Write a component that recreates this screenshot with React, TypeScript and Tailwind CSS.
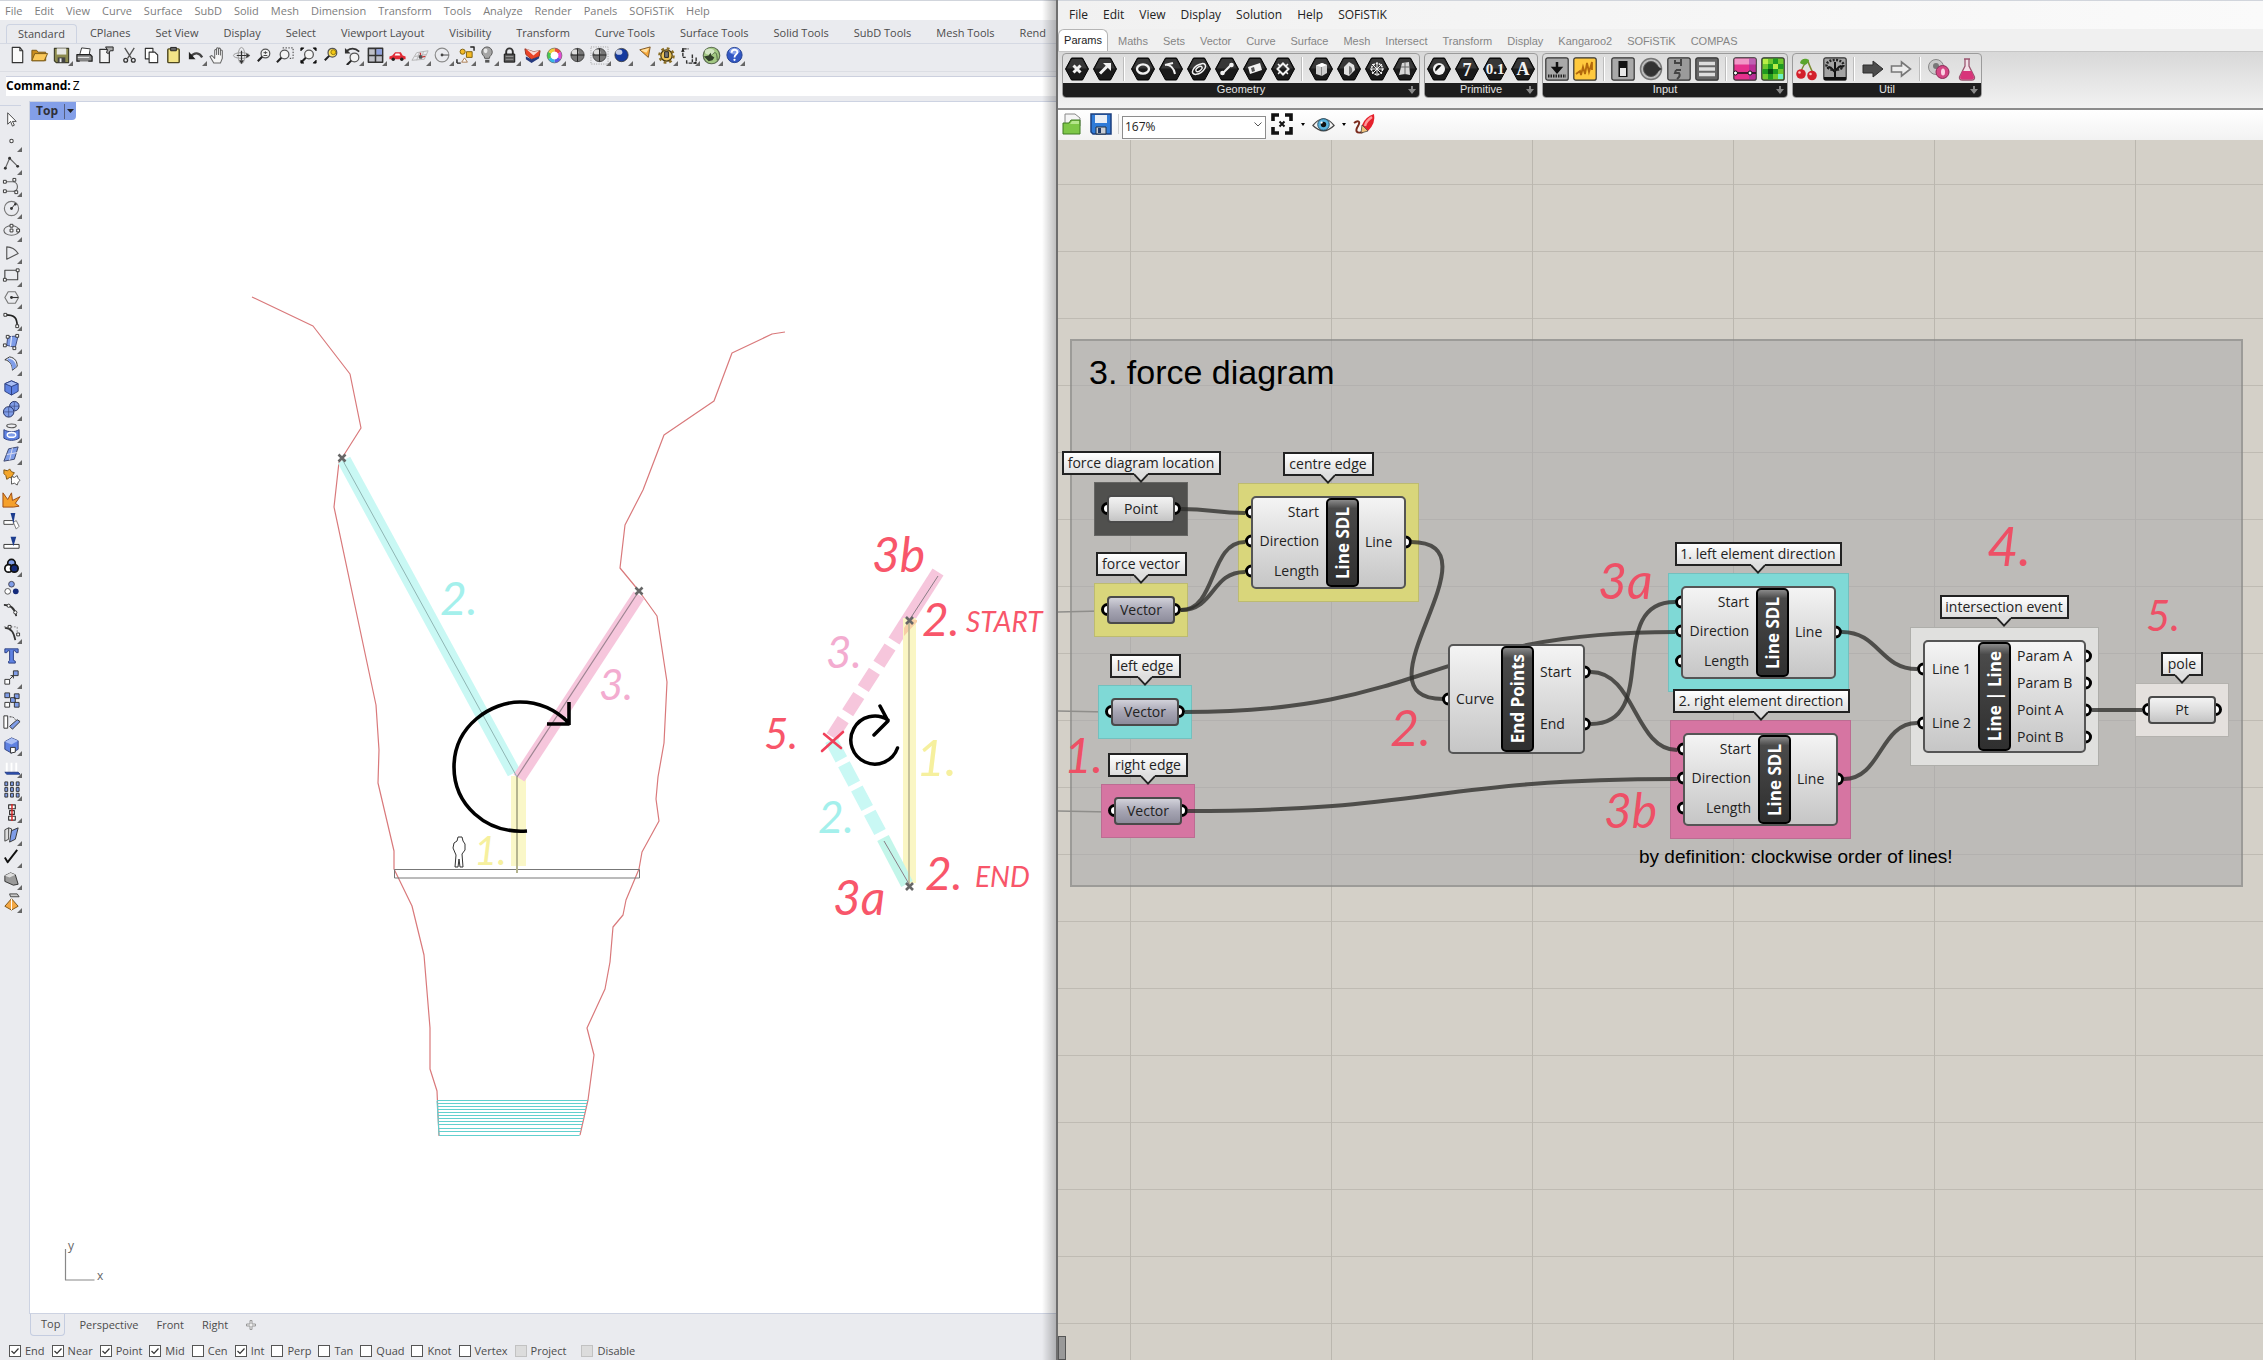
import React from "react";

type Icon = { label: string; art: React.ReactNode; more?: boolean };

const Lens = ({ x = 12, y = 7, fill = "#f4f4f4" }: { x?: number; y?: number; fill?: string }) => (
  <>
    <circle cx={x} cy={y} r="4.6" fill={fill} stroke="#555" strokeWidth="1.3" />
    <path d={`M${x - 3.4} ${y + 3.4} L${x - 8} ${y + 8}`} stroke="#222" strokeWidth="2.2" />
  </>
);

const Sphere = ({ color }: { color: string }) => (
  <>
    <circle cx="10" cy="9.5" r="7" fill={color} stroke="#333" strokeWidth="0.8" />
    <ellipse cx="7.5" cy="6.5" rx="3.4" ry="2.8" fill="#fff" opacity="0.75" />
  </>
);

const standardIcons: Icon[] = [
  { label: "New", art: <path d="M4.500 1.500h8l3 3.500v12.500h-11z M12.500 1.500v3.500h3" fill="#fafafa" stroke="#333" strokeWidth="1.2" /> },
  { label: "Open", art: <><path d="M2 4.500h5l1.500 2h8v9H2z" fill="#c98d1e" stroke="#7a5a16" /><path d="M5 8h13.500l-3.500 7.500H2z" fill="#fbc95a" stroke="#7a5a16" /></> },
  { label: "Save", more: true, art: <><path d="M2.500 2.500h15v15h-13l-2-2z" fill="#8d8b4e" stroke="#3d3d2a" strokeWidth="1.200" /><path d="M5 2.500h10v6.500H5z" fill="#e8e8e4" /><path d="M6 12h8v5.500H6z" fill="#444" /><path d="M8 13h2v4H8z" fill="#eee" /></> },
  { label: "Print", art: <><path d="M7 2l9 1-1 6H5z" fill="#fff" stroke="#333" /><path d="M2 9h14l2 2v5H2z" fill="#888" stroke="#222" strokeWidth="1.300" /><path d="M3 12h12M5 16h9" stroke="#eee" /></> },
  { label: "Document properties", art: <><path d="M3 3.500h10v14H3z" fill="#f4f4f4" stroke="#333" strokeWidth="1.300" /><path d="M9 1h8v4h-3l-2 3-2-1 1-3z" fill="#aaa" stroke="#222" /></> },
  { label: "Cut", art: <><path d="M5 2l7 11M15 2L8 13" stroke="#555" strokeWidth="1.400" /><circle cx="6" cy="15" r="2" fill="none" stroke="#333" strokeWidth="1.400" /><circle cx="14" cy="15" r="2" fill="none" stroke="#333" strokeWidth="1.400" /></> },
  { label: "Copy", art: <><path d="M3.500 2.500h8v11h-8z" fill="#fff" stroke="#333" strokeWidth="1.200" /><path d="M7.500 6.500h6l3 3v8h-9z" fill="#fff" stroke="#333" strokeWidth="1.200" /></> },
  { label: "Paste", art: <><rect x="4" y="3" width="12" height="14.500" rx="1" fill="#f3e487" stroke="#4d4620" strokeWidth="1.500" /><path d="M7 1.500h6v3.500H7z" fill="#666" stroke="#222" /></> },
  { label: "Undo", more: true, art: <><path d="M4 11c4-5 9-4 12 1" fill="none" stroke="#444" strokeWidth="2.400" /><path d="M2 6v8h7z" fill="#222" /></> },
  { label: "Pan", art: <path d="M5 18l-4-7 2-1 3 3V4.500q1-1.500 2 0V9 2.500q1-1.500 2 0V9 3q1-1.500 2 0v6.500V5q1-1.500 2 0v8l-2 5z" fill="#f5f5f5" stroke="#666" strokeWidth="1.100" /> },
  { label: "Rotate view", art: <><ellipse cx="10" cy="10" rx="3.500" ry="8.500" fill="none" stroke="#999" /><ellipse cx="10" cy="10" rx="8.500" ry="3" fill="none" stroke="#999" /><path d="M10 5v10M5 10h10" stroke="#333" strokeWidth="1.300" /><path d="M15 7.500l4 2.500-4 2.500zM7.500 15l2.500 4 2.500-4z" fill="#333" /></> },
  { label: "Zoom dynamic", art: <><Lens x={12} y={8} /><path d="M10 7h4M12 5.500v3M10 10h4" stroke="#444" /></> },
  { label: "Zoom window", art: <><Lens x={9} y={9} /><path d="M7 2h11v11h-4" fill="none" stroke="#333" strokeDasharray="1.500 1.500" /></> },
  { label: "Zoom extents", art: <><Lens x={10.500} y={9} /><path d="M2 5V2h3zM18 5V2h-3zM18 15v3h-3zM2 15v3h3z" fill="#111" stroke="#111" /></> },
  { label: "Zoom selected", art: <><Lens x={12} y={7} fill="#ffe35e" /><circle cx="13" cy="6.500" r="2.600" fill="#f3c812" stroke="#8d7410" /></> },
  { label: "Undo view change", more: true, art: <><Lens x={11} y={12} /><path d="M3 5c4-3 9-3 13 1" fill="none" stroke="#333" strokeWidth="1.800" /><path d="M1 2v6h6z" fill="#333" /></> },
  { label: "Four viewports", more: true, art: <><rect x="2.500" y="2.500" width="15" height="14.500" fill="#bfc0c8" stroke="#333" strokeWidth="1.600" /><path d="M10.800 3.300h6v6h-6z" fill="#8fa0dc" /><path d="M10 2v15M2 10h16" stroke="#333" strokeWidth="1.600" /></> },
  { label: "Named views", more: true, art: <><path d="M1.500 11l3-1 3-3.500h6l2 3.500 3 1v3h-17z" fill="#e22b36" /><path d="M8 8h4l1 2H7z" fill="#fff" /><circle cx="5.500" cy="14" r="1.800" fill="#222" /><circle cx="14.500" cy="14" r="1.800" fill="#222" /></> },
  { label: "Set construction plane", more: true, art: <><path d="M1 15l5-8 12-2-4 9zM4 11l12-2M9 6.500L6 15M13 6l-2 8.500" fill="none" stroke="#b5b5b5" /><path d="M10 12V7M10 12l5-1" stroke="#c33" strokeWidth="1.300" /><circle cx="10" cy="11.500" r="2" fill="#555" /></> },
  { label: "Circle", more: true, art: <><circle cx="9.500" cy="9.500" r="7.200" fill="none" stroke="#8a8a8a" strokeWidth="1.200" /><path d="M9.500 9.500h7" stroke="#444" /><circle cx="9.500" cy="9.500" r="1.500" fill="#444" /></> },
  { label: "Select", more: true, art: <><path d="M1 18v-4M1 18h4M15 1h4v4" stroke="#222" fill="none" strokeWidth="1.500" /><circle cx="7" cy="6" r="2.700" fill="#f5ba24" stroke="#80610f" /><path d="M11 6h6v6h-6z" fill="#f5ba24" stroke="#80610f" /><path d="M9 12.500l3 4.500H6z" fill="#fff" stroke="#a7764a" /></> },
  { label: "Hide objects", more: true, art: <><path d="M7 13c0-3-3-3-3-6.500a5.500 5.500 0 0 1 11 0c0 3.500-3 3.500-3 6.500z" fill="#a5a5a5" stroke="#555" /><path d="M7.500 14.500h4.500v3h-4.500z" fill="#555" /><ellipse cx="8" cy="5" rx="2" ry="2.500" fill="#e9e9e9" /></> },
  { label: "Lock objects", more: true, art: <><path d="M6.500 9V6a3.500 3.500 0 0 1 7 0v3" fill="none" stroke="#333" strokeWidth="2" /><rect x="4.500" y="8.500" width="11" height="8.500" fill="#555" stroke="#111" /><path d="M6 11h8M6 14h8" stroke="#999" /></> },
  { label: "Layers", more: true, art: <><path d="M2 3l9 3 7-1-1 6-8 3-6-5z" fill="#ea4327" stroke="#932" /><path d="M3 3l8 3 6-1-6 5z" fill="#fff" opacity="0.800" /><path d="M3 11l6 3 8-3v2l-8 5-6-4z" fill="#25397e" /></> },
  { label: "Object properties", more: true, art: <g fill="none" strokeWidth="3.600"><circle cx="10" cy="10" r="4.500" fill="#fff" /><path d="M10 4a6 6 0 0 1 5.200 3" stroke="#f04a3a" /><path d="M15.200 7a6 6 0 0 1 0 6" stroke="#e34ad4" /><path d="M15.200 13a6 6 0 0 1-5.200 3" stroke="#5b59e8" /><path d="M10 16a6 6 0 0 1-5.200-3" stroke="#35b6e8" /><path d="M4.800 13a6 6 0 0 1 0-6" stroke="#48c850" /><path d="M4.800 7a6 6 0 0 1 5.200-3" stroke="#f0cf3a" /><circle cx="10" cy="10" r="7.800" stroke="#666" strokeWidth="0.700" /></g> },
  { label: "Shade", art: <><Sphere color="#777" /><path d="M3 9.500h14M10 2.500v14" stroke="#222" /></> },
  { label: "Shade selected", more: true, art: <><path d="M1 1h18v18H1z" fill="none" stroke="#999" strokeDasharray="1 1.500" /><Sphere color="#777" /><path d="M3 9.500h14M10 2.500v14" stroke="#222" /></> },
  { label: "Render", more: true, art: <Sphere color="#153a9e" /> },
  { label: "Spotlight", more: true, art: <><path d="M5 4l11-3-2 11z" fill="#f7a83a" stroke="#7d5a2a" /><path d="M6 4.500l9-2.500-3 5z" fill="#ffe1a2" /></> },
  { label: "Options", more: true, art: <><circle cx="10" cy="10" r="6" fill="#e9c257" stroke="#4a3a12" strokeWidth="1.300" /><circle cx="10" cy="10" r="7.500" fill="none" stroke="#8a6d24" strokeWidth="2.500" strokeDasharray="2.900 3" /><path d="M8 6h4v6H8z" fill="#777" stroke="#222" /></> },
  { label: "Dimension", more: true, art: <><path d="M3 2v10h3M3 3h6M13 9v8M7 15v3h10v-7" fill="none" stroke="#333" strokeWidth="1.500" strokeDasharray="4 1" /><path d="M1 6l2-3 2 3zM14 18l3-2v3z" fill="#222" /></> },
  { label: "Grasshopper", more: true, art: <><circle cx="10" cy="10" r="8.700" fill="#a3c983" stroke="#5b6b50" strokeWidth="1.200" /><ellipse cx="8" cy="6" rx="5" ry="3.200" fill="#d3e6c2" /><path d="M2 11l5-1 2-3 1 3 3 2-2 3-4 1z" fill="#32402b" /><path d="M11 9c3-4 5-2 5 6" fill="none" stroke="#4c6040" /></> },
  { label: "Help", more: true, art: <><circle cx="10" cy="9.500" r="8" fill="#3358c4" stroke="#23408f" /><ellipse cx="10" cy="5.500" rx="5.500" ry="3.500" fill="#86a0ea" /><path d="M7 7c0-4 6-4 6-.500 0 2.500-3 2.500-3 5.500" fill="none" stroke="#fff" strokeWidth="1.900" /><circle cx="10" cy="14.500" r="1.200" fill="#fff" /></> },
];

const Dot = ({ x, y }: { x: number; y: number }) => <rect x={x - 1.5} y={y - 1.5} width="3" height="3" fill="#fff" stroke="#333" />;
const BLUE = "#7f9de8";

const sideIcons: Icon[] = [
  { label: "Pointer", art: <path d="M6 3v12l3-3 2 5 2-1-2-4h4z" fill="#fff" stroke="#444" /> },
  { label: "Point", more: true, art: <circle cx="10" cy="9.500" r="1.800" fill="#fff" stroke="#444" strokeWidth="1.100" /> },
  { label: "Polyline", more: true, art: <><path d="M3.500 15L8 4.500 16.500 13" fill="none" stroke="#666" strokeWidth="1.200" /><circle cx="3.500" cy="15" r="1.500" fill="#333" /><circle cx="8" cy="4.500" r="1.500" fill="#333" /><circle cx="16.500" cy="13" r="1.500" fill="#333" /></> },
  { label: "Control point curve", more: true, art: <><path d="M3 5h8c7 0 7 11 0 10H3" fill="none" stroke="#666" strokeWidth="1.200" /><Dot x={3} y={5} /><Dot x={13} y={3} /><Dot x={3} y={15} /><Dot x={15} y={16} /></> },
  { label: "Circle", more: true, art: <><circle cx="10" cy="10" r="7.500" fill="none" stroke="#777" strokeWidth="1.200" /><path d="M10 10l4-5" stroke="#333" /><circle cx="10" cy="10" r="1.500" fill="#333" /><circle cx="14" cy="5.500" r="1.300" fill="#333" /></> },
  { label: "Ellipse", more: true, art: <><ellipse cx="10" cy="10" rx="8" ry="5" fill="none" stroke="#666" strokeWidth="1.200" /><Dot x={10} y={10} /><Dot x={10} y={5} /><Dot x={17} y={10} /></> },
  { label: "Arc", more: true, art: <path d="M5 16V3c6 0 10 4 12 7z" fill="none" stroke="#555" strokeWidth="1.200" /> },
  { label: "Rectangle", more: true, art: <><path d="M3 4.500h13.500v10H3z" fill="none" stroke="#444" strokeWidth="1.200" /><Dot x={3} y={14.500} /><Dot x={16.500} y={4.500} /></> },
  { label: "Polygon", more: true, art: <><path d="M6.500 4h7.500l3.500 6-3.500 6H6.500L3 10z" fill="none" stroke="#777" strokeWidth="1.200" /><path d="M10 10h7" stroke="#333" strokeWidth="1.200" /><circle cx="10" cy="10" r="1.500" fill="#333" /></> },
  { label: "Fillet curves", more: true, art: <><path d="M4 4c9 0 12 3 12 12" fill="none" stroke="#222" strokeWidth="1.800" /><Dot x={3.500} y={4} /><Dot x={16} y={16} /></> },
  { label: "Surface from points", more: true, art: <><path d="M6 4l11-1-3 12-9-2z" fill={BLUE} stroke="#3c4a80" /><path d="M10 3.500L9 14" stroke="#fff" /><Dot x={6} y={4} /><Dot x={16} y={3} /><Dot x={3} y={13} /><Dot x={13} y={16} /></> },
  { label: "Sweep", more: true, art: <><path d="M3 5l5-3c6 1 8 5 8 10l-5 4c0-6-3-10-8-11z" fill="#e9edf9" stroke="#333" /><path d="M6 3.500c6 1 9 5 9 9l-4 3c0-5-2-8-5-10z" fill={BLUE} /></> },
  { label: "Box", more: true, art: <><path d="M3 6l7-3 7 3v8l-7 4-7-4z" fill="#5f82e2" stroke="#2c3f80" /><path d="M3 6l7 3 7-3-7-3z" fill="#a9bef5" stroke="#2c3f80" /><path d="M10 9v9" stroke="#2c3f80" /></> },
  { label: "Boolean", more: true, art: <><circle cx="13" cy="6.500" r="5" fill={BLUE} stroke="#222e60" /><circle cx="7" cy="12.500" r="5.500" fill={BLUE} stroke="#222e60" /><path d="M2 12.500h10M7 7v11M13 2v9M8 6.500h10" stroke="#3c4a80" strokeWidth="0.700" /></> },
  { label: "Project", more: true, art: <><ellipse cx="10" cy="3" rx="5" ry="2" fill="none" stroke="#555" strokeWidth="1.200" /><path d="M2 7c5 3 11 3 16 0v9c-5 3-11 3-16 0z" fill="#5f82e2" stroke="#2c3f80" /><ellipse cx="10" cy="12.500" rx="4.500" ry="2.500" fill={BLUE} stroke="#fff" strokeWidth="1.500" /></> },
  { label: "Mesh", more: true, art: <><path d="M7 4l10-2-4 13-11 2z" fill={BLUE} stroke="#3b456b" /><path d="M5 10l11-2M11 3L8 16" stroke="#dde" /></> },
  { label: "Join", art: <><path d="M2 3l4 1 2-2 2 3 3 1-2 3 1 3-4-1-3 2-1-4-2-2z" fill="#f4a62a" stroke="#7c5313" /><path d="M10 10l3 1 3-2 1 3 2 2-2 2-1 3-3-2-3 1 0-4z" fill="#fff" stroke="#555" /></> },
  { label: "Explode", art: <path d="M1 18V3l5 7 4-7 1 8 8-4-5 7 4 3-6 1z" fill="#f5a02c" stroke="#9a4a12" /> },
  { label: "Trim", art: <><path d="M2 9h10v4H2z" fill="#fff" stroke="#444" /><path d="M12 11l3-2 3 6-3 3z" fill="#fff" stroke="#777" /><path d="M9 1h5l-2 11z" fill="#1d3d8f" /></> },
  { label: "Split", art: <><path d="M2 11h16v4H2z" fill="#fff" stroke="#333" /><path d="M9 3h6l-3 10z" fill="#1d3d8f" /></> },
  { label: "Group", more: true, art: <><circle cx="10" cy="6.500" r="4" fill={BLUE} stroke="#111" strokeWidth="1.800" /><circle cx="7" cy="12" r="4" fill="#fff" stroke="#111" strokeWidth="1.800" /><circle cx="13" cy="12" r="4" fill="#142a7a" stroke="#111" strokeWidth="1.800" /></> },
  { label: "Ungroup", art: <><circle cx="10" cy="5.500" r="3" fill={BLUE} stroke="#445" /><circle cx="6" cy="13" r="3" fill="#fff" stroke="#555" /><circle cx="14.500" cy="13" r="3" fill="#142a7a" /></> },
  { label: "Edit points", art: <><path d="M2 4c8 0 12 5 13 12" fill="none" stroke="#333" strokeWidth="1.800" /><circle cx="7" cy="5" r="1.700" fill="#fff" stroke="#333" /><circle cx="14" cy="12" r="1.700" fill="#fff" stroke="#333" /></> },
  { label: "Control points", more: true, art: <><path d="M3 4c8 0 10 7 11 13" fill="none" stroke="#333" strokeWidth="1.800" /><path d="M2 3h14v10" fill="none" stroke="#888" strokeDasharray="2 1.500" /><Dot x={8} y={3} /><Dot x={17} y={11} /></> },
  { label: "Text", art: <path d="M3 3h14v4h-2l-1-2h-2v10l2 1v2H7v-2l1-1V5H6L5 7H3z" fill="#5f82e2" stroke="#2c3f80" /> },
  { label: "Move", more: true, art: <><path d="M3 12h5v5H3z" fill="#fff" stroke="#333" /><path d="M12 3h5v5h-5z" fill={BLUE} stroke="#333" /><path d="M8 12l4-4M9 8h3v3" stroke="#333" fill="none" /></> },
  { label: "Copy", art: <><path d="M3 12h5v5H3z" fill="#fff" stroke="#333" /><path d="M3 2h5v5H3zM9 7h5v5H9zM13 12h5v5h-5zM13 3h5v5h-5z" fill={BLUE} stroke="#333" /></> },
  { label: "Rotate", art: <><path d="M2 3h4v13H2z" fill="#fff" stroke="#333" /><path d="M8 14l8-7 3 2-8 8z" fill={BLUE} stroke="#333" /><path d="M8 4c4 0 5 1 6 3" fill="none" stroke="#333" strokeDasharray="2 1" /></> },
  { label: "Solid", more: true, art: <><path d="M3 6l7-4 7 3v9l-7 4-7-4z" fill="#5f82e2" stroke="#2c3f80" /><path d="M3 6l7 3 7-4-7-3z" fill="#a9bef5" /><path d="M9 12h5v5l-5 1z" fill="#fff" stroke="#333" /></> },
  { label: "Array", more: true, art: <><path d="M3 15h14l2 2H5z" fill="#2f57c5" stroke="#223a80" /><path d="M5 14V5M10 14V5M15 14V5" stroke="#fff" strokeWidth="2" /></> },
  { label: "Grid array", more: true, art: <g fill={BLUE} stroke="#333"><path d="M3 2h3v4H3zM9 2h3v4H9zM15 2h3v4h-3zM3 8h3v4H3zM9 8h3v4H9zM15 8h3v4h-3zM3 14h3v4H3zM9 14h3v4H9zM15 14h3v4h-3z" /></g> },
  { label: "Align", more: true, art: <><path d="M7 2h7v4H7zM8 8h5v4H8zM7 14h7v4H7z" fill="#fff" stroke="#333" strokeWidth="1.200" /><path d="M10.500 1v18" stroke="#d22" strokeWidth="1.500" /></> },
  { label: "Orient", more: true, art: <><path d="M3 5l4-2v12l-4 2zM7 3l3 1v11" fill="#ddd" stroke="#444" /><path d="M10 6l7-3-3 12-6 3z" fill={BLUE} stroke="#333" /></> },
  { label: "Check", more: true, art: <path d="M3 11l3 5L16 3" fill="none" stroke="#111" strokeWidth="2" /> },
  { label: "Analyze solid", more: true, art: <><path d="M3 6l6-3 5 2 3 10-5 1-9-4z" fill="#9a9a9a" stroke="#333" /><path d="M3 6l5 2 6-3-5-2z" fill="#ddd" /></> },
  { label: "Render preview", more: true, art: <><path d="M10 7l7 8-7 4-7-4z" fill="#f4a844" stroke="#7c5313" /><path d="M10 7v12" stroke="#fff" /><path d="M8 2h8l2 3H9z" fill="#ccc" stroke="#444" /></> },
];

function ToolButton({ icon }: { icon: Icon }) {
  return (
    <button aria-label={icon.label} className="relative flex h-[22px] w-[22px] shrink-0 items-center justify-center">
      <svg viewBox="0 0 20 20" className="h-[19px] w-[19px]" strokeLinejoin="round">{icon.art}</svg>
      {icon.more && (
        <svg viewBox="0 0 5 5" className="absolute right-0 bottom-0 h-[5px] w-[5px]"><path d="M5 0v5H0z" fill="#666" /></svg>
      )}
    </button>
  );
}

const rhinoMenu = ["File", "Edit", "View", "Curve", "Surface", "SubD", "Solid", "Mesh", "Dimension", "Transform", "Tools", "Analyze", "Render", "Panels", "SOFiSTiK", "Help"];
const rhinoTabs = ["Standard", "CPlanes", "Set View", "Display", "Select", "Viewport Layout", "Visibility", "Transform", "Curve Tools", "Surface Tools", "Solid Tools", "SubD Tools", "Mesh Tools", "Rend"];
const snaps: [string, boolean, boolean?][] = [
  ["End", true], ["Near", true], ["Point", true], ["Mid", true], ["Cen", false], ["Int", true], ["Perp", false],
  ["Tan", false], ["Quad", false], ["Knot", false], ["Vertex", false], ["Project", false, true], ["Disable", false, true],
];

const Mark = ({ x, y }: { x: number; y: number }) => (
  <path d={`M${x - 3.5} ${y - 3.5}l7 7M${x + 3.5} ${y - 3.5}l-7 7`} stroke="#666" strokeWidth="2.6" />
);

const waterLines = [1100, 1103, 1106, 1109, 1112, 1115, 1118, 1121, 1124, 1128, 1131, 1135];

function SectionDrawing() {
  return (
    <svg viewBox="30 102 1028 1213" className="absolute top-0 left-0 h-[1213px] w-[1028px]" fill="none" strokeLinejoin="round">
      <g stroke="#d9797b" strokeWidth="1.2">
        <path d="M252 297L313 326 350 374 361 428 342 458 339 462 334 507 376 705 379 750 378 783 394 851 394 869 412 906 424 955 430 1028 430 1069 437 1091 439 1136" />
        <path d="M785 332L772 334 732 353 714 401 664 435 643 490 625 525 620 568 639 591 657 616 667 682 664 743 658 777 656 799 659 821 642 852 639 869 626 900 623 915 613 927 610 962 605 989 587 1028 594 1055 588 1100 580 1135" />
      </g>
      <g stroke="#62d0ce" strokeWidth="1">
        {waterLines.map((y) => <path key={y} d={`M${437 + (y - 1100) / 17} ${y + 0.5}H${588 - (y - 1100) / 4.2}`} />)}
        <path d="M437 1101L439 1135" />
      </g>
      <path d="M394.500 869.500h245v8.500h-245z" stroke="#777" />
      <path d="M344 460L514 773" stroke="#c9f8f4" strokeWidth="14" />
      <path d="M518.500 776v90" stroke="#faf7c8" strokeWidth="15" />
      <path d="M639 595L519 778" stroke="#f6c6dc" strokeWidth="13" />
      <path d="M342 459L517 777" stroke="#8fb5b3" />
      <path d="M639 591L517 777" stroke="#9d8491" strokeWidth="1.200" />
      <path d="M517 777v96" stroke="#b5b48f" strokeWidth="2" />
      <Mark x={342} y={458} />
      <Mark x={639} y={591} />
      <path d="M455 867l1-12-3-7 1-5 3-2 1-4h4l1 4 2 3v6l-3 4 1 13h-3l-1-8-1 8z" stroke="#333" />
      <path d="M527 831C485 834 454 804 454 767C454 725 492 702 520 702C542 702 557 711 569 723M547 724H569.500M569 702V725" stroke="#000" strokeWidth="3.600" />

      <path d="M938 572L894 641" stroke="#f6c6dc" strokeWidth="13" />
      <path d="M890 647L832 737" stroke="#f6c6dc" strokeWidth="13" strokeDasharray="20.500 8.300" />
      <path d="M909.500 618V883" stroke="#faf6c4" strokeWidth="13" />
      <path d="M831 740L880 832" stroke="#c9f8f4" strokeWidth="13" strokeDasharray="22 5.500" />
      <path d="M883 838L907 884" stroke="#c3f6ea" strokeWidth="13" />
      <path d="M904 628l6-9 7 1v2l-13 14z" fill="#f7cfa5" />
      <path d="M909 620V886" stroke="#b9b692" strokeWidth="1.600" />
      <path d="M938 576L910 619M884 841L909 884" stroke="#8a7d86" strokeWidth="1" />
      <Mark x={909.500} y={620.500} />
      <Mark x={909.500} y={886.500} />
      <path d="M843 732L822 751M824 734L841 748" stroke="#f0405a" strokeWidth="2.600" strokeLinecap="round" />
      <path d="M897.500 748A24 24 0 1 1 888 720M880 706L888 721L874 735" stroke="#000" strokeWidth="3.500" strokeLinecap="round" />

      <g stroke="none" fontFamily="Lato, sans-serif" fontStyle="italic">
        <text x="440" y="615" fontSize="46" fill="#a4f0ec">2.</text>
        <text x="599" y="700" fontSize="42" fill="#f3acd0">3.</text>
        <text x="474" y="865" fontSize="40" fill="#f6f09e">1.</text>
        <g fill="#f8566a">
          <text x="872" y="572" fontSize="48">3b</text>
          <text x="922" y="636" fontSize="46">2.</text>
          <text x="966" y="632" fontSize="28">START</text>
          <text x="764" y="749" fontSize="42">5.</text>
          <text x="925" y="890" fontSize="46">2.</text>
          <text x="975" y="887" fontSize="28">END</text>
          <text x="833" y="915" fontSize="48">3a</text>
        </g>
        <text x="826" y="668" fontSize="44" fill="#f3acd0">3.</text>
        <text x="916" y="776" fontSize="50" fill="#f6f09e">1.</text>
        <text x="818" y="833" fontSize="44" fill="#a4f0ec">2.</text>
      </g>

      <path d="M65.500 1249v31h29" stroke="#888" strokeWidth="1.200" />
      <g stroke="none" fill="#666" fontFamily="'Open Sans', sans-serif" fontSize="12">
        <text x="68" y="1250">y</text>
        <text x="97" y="1280">x</text>
      </g>
    </svg>
  );
}

function Rhino() {
  return (
    <section className="relative flex min-w-0 flex-[1058_1_0%] flex-col overflow-hidden bg-[#eaebef] font-['Open_Sans',sans-serif] text-[11px] text-[#4c4c4c]">
      <nav className="flex h-5 shrink-0 items-center gap-3 overflow-hidden border-t border-gray-300 bg-white pt-[2px] pl-[5px] whitespace-nowrap text-[#7d7d7d]">
        {rhinoMenu.map((m) => <button key={m}>{m}</button>)}
      </nav>
      <div role="tablist" className="mt-1 flex h-5 shrink-0 gap-px overflow-hidden border-b border-[#d5d9e3] pl-[6px] whitespace-nowrap">
        {rhinoTabs.map((t, i) => (
          <button key={t} role="tab" aria-selected={i === 0} className={i === 0 ? "rounded-t border border-b-0 border-[#cdd3e2] px-[11px]" : "px-3"}>{t}</button>
        ))}
      </div>
      <div className="shrink-0 border-b border-[#dcdee4] pb-[5px]">
        <div className="ml-[6px] flex w-[739px] justify-between">
          {standardIcons.map((icon) => <ToolButton key={icon.label} icon={icon} />)}
        </div>
      </div>
      <label className="mt-1 ml-[6px] flex h-5 shrink-0 items-center border-t border-[#ccd0de] bg-white pb-[2px] text-xs text-black">
        <b>Command:</b>
        <input defaultValue="Z" className="ml-[2px] min-w-0 flex-1 bg-transparent outline-none" />
      </label>
      <div className="mt-[5px] flex min-h-0 flex-1">
        <div className="w-[29px] shrink-0 pt-1">
          <div className="mr-2 border-t border-[#cdd3e2]" />
          <div className="flex h-[807px] flex-col justify-between pt-[2px]">
            {sideIcons.map((icon, i) => <ToolButton key={icon.label + i} icon={icon} />)}
          </div>
        </div>
        <div className="relative min-w-0 flex-1 overflow-hidden border border-r-0 border-[#cdd3e2] bg-white">
          <SectionDrawing />
          <button className="absolute top-0 left-0 flex h-[18px] w-[46px] items-center rounded-br bg-[#839fe8] pl-[6px] text-xs font-bold text-[#2f3038]">
            Top
            <span className="ml-[6px] flex h-[15px] items-center border-l border-[#555e80] pl-[2px]">
              <svg viewBox="0 0 7 4" className="h-1 w-[7px]"><path d="M0 0h7L3.500 4z" fill="#222" /></svg>
            </span>
          </button>
        </div>
      </div>
      <div className="flex h-[22px] shrink-0 items-stretch pl-[30px]">
        <button className="rounded-b border border-t-0 border-[#c5cde0] pr-1 pl-[10px]">Top</button>
        <button className="ml-[14px]">Perspective</button>
        <button className="ml-[18px]">Front</button>
        <button className="ml-[18px]">Right</button>
        <button aria-label="Add viewport" className="ml-[18px]">
          <svg viewBox="0 0 10 10" className="h-[10px] w-[10px]"><path d="M4 .500h2V4h3.500v2H6v3.500H4V6H.500V4H4z" fill="#eee" stroke="#999" /></svg>
        </button>
      </div>
      <div className="mt-[6px] flex h-[18px] shrink-0 items-center gap-[7px] overflow-hidden pl-[9px] whitespace-nowrap">
        {snaps.map(([name, on, off]) => (
          <label key={name} className={off ? "mr-2 flex items-center gap-1" : "flex items-center gap-1"}>
            <span className="relative h-3 w-3">
              <input type="checkbox" defaultChecked={on} disabled={off} className="peer block h-3 w-3 appearance-none border border-[#555] bg-white disabled:border-[#c2c2c2] disabled:bg-[#dcdcdc]" />
              <svg viewBox="0 0 12 12" className="pointer-events-none absolute inset-0 hidden h-3 w-3 peer-checked:block"><path d="M2.500 6l2.500 2.500 4.500-5" fill="none" stroke="#333" strokeWidth="1.200" /></svg>
            </span>
            {name}
          </label>
        ))}
      </div>
      <div className="pointer-events-none absolute inset-y-0 right-0 w-4 border-r-2 border-[#6f6f6f] bg-linear-to-r from-transparent to-black/25" />
    </section>
  );
}

const Hex = ({ children }: { children: React.ReactNode }) => (
  <>
    <path d="M6.500 1h11L23.500 12 17.500 23h-11L.500 12z" fill="#1b1b1b" stroke="#000" />
    <path d="M7 2h10l5 9.500H2z" fill="#4b4b4b" opacity="0.600" />
    {children}
  </>
);
const Tile = ({ fill = "#a9a9a9", children }: { fill?: string; children?: React.ReactNode }) => (
  <><rect x="0.800" y="0.800" width="22.400" height="22.400" rx="2" fill={fill} stroke="#333" strokeWidth="1.200" />{children}</>
);

type Ribbon = { name: string; groups: Icon[][] };
const W = "#f2f2f2";
const ribbons: Ribbon[] = [
  {
    name: "Geometry",
    groups: [
      [
        { label: "Point", art: <Hex><path d="M8.500 8.500l7 7M15.500 8.500l-7 7" stroke={W} strokeWidth="3" /></Hex> },
        { label: "Vector", art: <Hex><path d="M7 16.500l7-7" stroke={W} strokeWidth="3" /><path d="M10 6h8v8z" fill={W} /></Hex> },
      ],
      [
        { label: "Circle", art: <Hex><ellipse cx="12" cy="12" rx="6" ry="4.600" fill="none" stroke={W} strokeWidth="2.400" /></Hex> },
        { label: "Circular arc", art: <Hex><path d="M6 8c5-1 9 3 10 9M6 8l8-2" fill="none" stroke={W} strokeWidth="2" /></Hex> },
        { label: "Curve", art: <Hex><ellipse cx="12" cy="12" rx="7.500" ry="4" transform="rotate(-35 12 12)" fill="none" stroke={W} strokeWidth="1.500" /><ellipse cx="12" cy="12" rx="3.500" ry="2" transform="rotate(-35 12 12)" fill="none" stroke={W} strokeWidth="1.300" /></Hex> },
        { label: "Line", art: <Hex><path d="M8 16l8-8" stroke={W} strokeWidth="2.200" /><circle cx="7.500" cy="16" r="2.300" fill={W} /><circle cx="16.500" cy="8" r="2.300" fill={W} /></Hex> },
        { label: "Plane", art: <Hex><path d="M5 10l12-4 2 7-12 4z" fill={W} /><path d="M8 11l3-1 1 4-3 1z" fill="#555" /></Hex> },
        { label: "Rectangle", art: <Hex><path d="M12 6.500l5.500 5.500-5.500 5.500L6.500 12z" fill="none" stroke={W} strokeWidth="2" /><path d="M7 7l10 10M17 7L7 17" stroke={W} strokeWidth="1.500" strokeDasharray="3 8" /></Hex> },
      ],
      [
        { label: "Box", art: <Hex><path d="M7 8.500l6-2.500 5 2v8l-5 3-6-2z" fill="#cfcfcf" /><path d="M7 8.500l5.500 1.500L18 8l-5-2z" fill="#fff" /><path d="M12.500 10v9" stroke="#888" /></Hex> },
        { label: "Brep", art: <Hex><path d="M7 10l5-5 5 3 1 5-6 6-5-2z" fill="#e2e2e2" /><path d="M12 9q4 1 3 6l-3 3z" fill="#777" /></Hex> },
        { label: "Mesh", art: <Hex><circle cx="12" cy="12" r="5.500" fill="none" stroke={W} strokeWidth="1.500" strokeDasharray="2 1" /><path d="M12 5v14M5 12h14M7 7l10 10M17 7L7 17" stroke={W} /></Hex> },
        { label: "Surface", art: <Hex><path d="M9 6l7-1 1 13-5-1-6 1z" fill="#d6d6d6" /><path d="M12 5.500v12M8 10h9" stroke="#666" /></Hex> },
      ],
    ],
  },
  {
    name: "Primitive",
    groups: [
      [
        { label: "Boolean", art: <Hex><circle cx="12" cy="12" r="6" fill={W} /><path d="M8.500 14.500a4.600 4.600 0 0 1 6-6z" fill="#111" /></Hex> },
        { label: "Integer", art: <Hex><text x="12" y="18.500" textAnchor="middle" fontSize="18" fontWeight="700" fill={W} fontFamily="'Liberation Serif', serif">7</text></Hex> },
        { label: "Number", art: <Hex><text x="12" y="17" textAnchor="middle" fontSize="15" fontWeight="700" fill={W} fontFamily="'Liberation Serif', serif">0.1</text></Hex> },
        { label: "Text", art: <Hex><text x="12" y="18" textAnchor="middle" fontSize="18" fontWeight="700" fill={W} fontFamily="'Liberation Serif', serif">A</text></Hex> },
      ],
    ],
  },
  {
    name: "Input",
    groups: [
      [
        { label: "Slider", art: <Tile><path d="M12 5v9M8.500 11l3.500 4 3.500-4z" stroke="#111" strokeWidth="2.500" fill="#111" /><path d="M3 19h18" stroke="#222" strokeWidth="3" strokeDasharray="1.500 1" /></Tile> },
        { label: "Panel", art: <Tile fill="#ffc93e"><path d="M3 17l4-3 1 4 2-8 2 7 2-11 2 9 3-10v8" fill="none" stroke="#b4690c" strokeWidth="1.800" /></Tile> },
      ],
      [
        { label: "Toggle", art: <Tile><rect x="7.500" y="4" width="9" height="16" fill="#111" /><rect x="9" y="11" width="6" height="8" fill="#e6e6e6" /></Tile> },
        { label: "Button", art: <><circle cx="12" cy="12" r="10.500" fill="#bcbcbc" stroke="#777" strokeWidth="1.500" /><circle cx="12" cy="12" r="7.500" fill="#333" stroke="#555" /><path d="M18 9l5 3-5 3z" fill="#333" /></> },
        { label: "Digit scroller", art: <Tile fill="#9b9b9b"><path d="M8 3v3h6V2M14 3v6M9 13h5M9 13l-1 3h4q2 3-2 6" fill="none" stroke="#444" strokeWidth="2" /></Tile> },
        { label: "Value list", art: <Tile fill="#666"><path d="M4 6.500h16M4 12h16M4 17.500h16" stroke="#ddd" strokeWidth="3.400" /></Tile> },
      ],
      [
        { label: "Gradient", art: <Tile fill="#e6318d"><path d="M1.500 1.500h21v6h-21z" fill="#f7c3df" opacity="0.700" /><path d="M16 1.500h6.500v21H16z" fill="#8b2aa0" opacity="0.500" /><path d="M1 16h22" stroke="#111" strokeWidth="1.300" /><circle cx="17" cy="16" r="2" fill="#fff" stroke="#111" /><circle cx="2.500" cy="16" r="2" fill="#fff" stroke="#111" /></Tile> },
        { label: "Colour swatch", art: <Tile fill="#6fc92e"><path d="M1.500 12H7V7h5V1.500h5V7h5.500v5H17v5h-5v5.500H7V17H1.500z" fill="#1f9a20" /><path d="M7 12h5v5H7z" fill="#0a4f12" /><path d="M12 7h5v5h-5zM2 2h5v5H2z" fill="#b9ee47" /><path d="M17 17h5v5h-5z" fill="#6ff0c4" /></Tile> },
      ],
    ],
  },
  {
    name: "Util",
    groups: [
      [
        { label: "Cherry picker", art: <><path d="M6 15C8 8 10 6 13 4c1 4 3 8 5 12" fill="none" stroke="#7a8a2e" strokeWidth="1.500" /><path d="M5 6c1-5 6-5 9-3-1 5-5 6-9 3z" fill="#5aa52d" /><circle cx="6" cy="17" r="4.800" fill="#d3202c" /><circle cx="17" cy="18.500" r="4.800" fill="#d3202c" /><circle cx="4.500" cy="15.500" r="1.300" fill="#fbb" /><circle cx="15.500" cy="17" r="1.300" fill="#fbb" /></> },
        { label: "Data tree", art: <Tile fill="#a3a3a3"><path d="M1 20h22v3H1z" fill="#111" /><path d="M12 21V10M12 15l-5-5M12 14l5-5M12 11V5M7 10l-3 1M17 9l3 1" stroke="#111" strokeWidth="2" /><ellipse cx="12" cy="8" rx="8.500" ry="5" fill="none" stroke="#222" strokeWidth="2.500" strokeDasharray="2 1.300" /></Tile> },
      ],
      [
        { label: "Relay", art: <path d="M2 8h10V4l10 8-10 8v-4H2z" fill="#4c4c4c" stroke="#2c2c2c" /> },
        { label: "Jump", art: <path d="M2.500 9h10V5l9 7-9 7v-4h-10z" fill="#ececec" stroke="#777" strokeWidth="1.600" /> },
      ],
      [
        { label: "Galapagos", art: <><circle cx="9" cy="10" r="7.500" fill="#c9c9c9" stroke="#888" /><circle cx="9" cy="9" r="3" fill="#777" /><circle cx="15.500" cy="15" r="6.500" fill="#d34784" stroke="#8c2a56" /><ellipse cx="16" cy="15" rx="2" ry="3.500" fill="#fbd3e3" /></> },
        { label: "Flask", art: <><path d="M9 2h6M10 2v7L4.500 20q-.500 3 3 3h9q3.500 0 3-3L14 9V2" fill="#f3dfe7" stroke="#9b5570" strokeWidth="1.300" /><path d="M7.500 14h9l2.500 6q0 2.500-2.500 2.500h-9Q5 22.500 5 20z" fill="#d8357a" /></> },
      ],
    ],
  },
];

const ghMenu = ["File", "Edit", "View", "Display", "Solution", "Help", "SOFiSTiK"];
const ghTabs = ["Maths", "Sets", "Vector", "Curve", "Surface", "Mesh", "Intersect", "Transform", "Display", "Kangaroo2", "SOFiSTiK", "COMPAS"];

function RibbonPanel({ ribbon }: { ribbon: Ribbon }) {
  return (
    <div className="flex h-[45px] shrink-0 flex-col overflow-hidden rounded border border-[#9b9b9b] bg-linear-to-b from-[#dcdcdc] to-[#ededed]">
      <div className="flex flex-1 items-center">
        {ribbon.groups.map((g, i) => (
          <React.Fragment key={i}>
            {i > 0 && <span className="mx-1 h-6 w-[2px] border-l border-[#bdbdbd] bg-white" />}
            {g.map((icon) => (
              <button key={icon.label} aria-label={icon.label} className="flex w-7 justify-center">
                <svg viewBox="0 0 24 24" className="h-6 w-6">{icon.art}</svg>
              </button>
            ))}
          </React.Fragment>
        ))}
      </div>
      <div className="relative h-[14px] bg-[#1e1e1e] px-4 text-center text-[11px] leading-[13px] text-[#e4e4e4]">
        {ribbon.name}
        <button aria-label={"Expand " + ribbon.name} className="absolute top-[3px] right-[3px]">
          <svg viewBox="0 0 8 8" className="h-2 w-2"><path d="M3 0h2v3h3L4 8 0 3h3z" fill="#888" /></svg>
        </button>
      </div>
    </div>
  );
}

type Tag = { text: string; w: number; x: number; y: number };
const tags: Tag[] = [
  { text: "force diagram location", w: 159, x: 1141, y: 451 },
  { text: "centre edge", w: 91, x: 1328, y: 452 },
  { text: "force vector", w: 91, x: 1141, y: 552 },
  { text: "left edge", w: 71, x: 1145, y: 654 },
  { text: "right edge", w: 80, x: 1148, y: 753 },
  { text: "1. left element direction", w: 167, x: 1758, y: 542 },
  { text: "2. right element direction", w: 177, x: 1761, y: 689 },
  { text: "intersection event", w: 129, x: 2004, y: 595 },
  { text: "pole", w: 42, x: 2182, y: 652 },
];

const OX = 1058;
const OY = 140;

type Port = { name: string; y: number };
type Comp = { title: string; ins: Port[]; outs: Port[]; x: number; y: number; w: number; h: number; left: number; pad?: string };
const sdl: Port[] = [{ name: "Start", y: 16 }, { name: "Direction", y: 45 }, { name: "Length", y: 75 }];
const comps: Comp[] = [
  { title: "Line SDL", ins: sdl, outs: [{ name: "Line", y: 46 }], x: 1251, y: 496, w: 155, h: 93, left: 75, pad: "bg-[#d9d67b] border-[#bdbb70]" },
  { title: "Line SDL", ins: sdl, outs: [{ name: "Line", y: 46 }], x: 1681, y: 586, w: 155, h: 93, left: 75, pad: "bg-[#7fd9d6] border-[#73c0be]" },
  { title: "Line SDL", ins: sdl, outs: [{ name: "Line", y: 46 }], x: 1683, y: 733, w: 155, h: 93, left: 75, pad: "bg-[#d675a2] border-[#bc6c92]" },
  { title: "End Points", ins: [{ name: "Curve", y: 55 }], outs: [{ name: "Start", y: 28 }, { name: "End", y: 80 }], x: 1448, y: 644, w: 137, h: 110, left: 53 },
  { title: "Line | Line", ins: [{ name: "Line 1", y: 29 }, { name: "Line 2", y: 83 }], outs: [{ name: "Param A", y: 16 }, { name: "Param B", y: 43 }, { name: "Point A", y: 70 }, { name: "Point B", y: 97 }], x: 1923, y: 640, w: 163, h: 113, left: 55, pad: "bg-[#e0e0de] border-[#aeaeaa]" },
];

type Param = { name: string; x: number; y: number; body: string; pad: string };
const LIGHT = "from-[#f3f3f3] via-[#dedede] to-[#c4c4c4]";
const IMPLICIT = "from-[#d2d2da] via-[#a6a5b3] to-[#8d8c9b]";
const params: Param[] = [
  { name: "Point", x: 1094, y: 482, body: LIGHT, pad: "bg-[#50504e] border-[#666664]" },
  { name: "Vector", x: 1094, y: 583, body: IMPLICIT, pad: "bg-[#d9d67b] border-[#bdbb70]" },
  { name: "Vector", x: 1098, y: 685, body: IMPLICIT, pad: "bg-[#7fd9d6] border-[#73c0be]" },
  { name: "Vector", x: 1101, y: 784, body: IMPLICIT, pad: "bg-[#d675a2] border-[#bc6c92]" },
  { name: "Pt", x: 2135, y: 683, body: LIGHT, pad: "bg-[#e4e0dd] border-[#b4b2ae]" },
];

const GRIP = "absolute h-[13px] w-[13px] rounded-full border-[3px] border-black bg-white";

function ParamNode({ p }: { p: Param }) {
  return (
    <div className={`absolute h-[54px] w-[94px] border p-[12px] ${p.pad}`} style={{ left: p.x - OX, top: p.y - OY }}>
      <div className="relative h-full w-full">
        <span className={`${GRIP} top-[7px] -left-[6px]`} />
        <span className={`${GRIP} top-[7px] -right-[6px]`} />
        <div className={`relative flex h-full items-center justify-center rounded border-2 border-[#4a4a4a] bg-linear-to-b text-sm leading-none text-[#222] ${p.body}`}>{p.name}</div>
      </div>
    </div>
  );
}

function ComponentNode({ c }: { c: Comp }) {
  return (
    <div className="absolute" style={{ left: c.x - OX, top: c.y - OY, width: c.w, height: c.h }}>
      {c.pad && <div className={`absolute -inset-[13px] border ${c.pad}`} />}
      {c.ins.map((p) => <span key={p.name} className={`${GRIP} -left-[6px] -translate-y-1/2`} style={{ top: p.y }} />)}
      {c.outs.map((p) => <span key={p.name} className={`${GRIP} -right-[6px] -translate-y-1/2`} style={{ top: p.y }} />)}
      <div className="absolute inset-0 rounded-[5px] border-2 border-[#555] bg-linear-to-b from-[#f4f4f4] via-[#dcdcdc] to-[#c6c6c6] text-sm leading-[18px] text-[#222]">
        <div className="relative -m-[2px] h-[calc(100%+4px)]">
          {c.ins.map((p) => <span key={p.name} className="absolute left-0 -translate-y-1/2 pr-[7px] text-right" style={{ top: p.y, width: c.left }}>{p.name}</span>)}
          {c.outs.map((p) => <span key={p.name} className="absolute -translate-y-1/2" style={{ top: p.y, left: c.left + 39 }}>{p.name}</span>)}
          <div className="absolute inset-y-[2px] flex w-[33px] items-center justify-center rounded-[5px] border-2 border-black bg-linear-to-b from-[#8a8a8a] from-0% via-[#4a4a4a] via-10% to-[#2f2f2f]" style={{ left: c.left }}>
            <span className="rotate-180 font-bold whitespace-nowrap text-white text-[17px] leading-none [writing-mode:vertical-rl]">{c.title}</span>
          </div>
        </div>
      </div>
    </div>
  );
}

function TagLabel({ t }: { t: Tag }) {
  return (
    <div className="absolute" style={{ left: t.x - t.w / 2 - OX, top: t.y - OY, width: t.w }}>
      <div className="flex h-6 items-center justify-center border-2 border-[#222] bg-linear-to-b from-white to-[#dedede] text-sm leading-none whitespace-nowrap text-[#222]">{t.text}</div>
      <svg viewBox="0 0 14 10" className="mx-auto -mt-[2px] block h-[10px] w-[14px]"><path d="M0 0h14v1.500L7 9 0 1.500z" fill="#dedede" /><path d="M0 1.200L7 8.700 14 1.200" fill="none" stroke="#222" strokeWidth="1.800" /></svg>
    </div>
  );
}

function Canvas() {
  return (
    <div className="relative min-h-0 flex-1 overflow-hidden bg-[#d4d0c8] bg-[linear-gradient(to_right,#bbb7af_1px,transparent_1px),linear-gradient(to_bottom,#bfbbb3_1px,transparent_1px)] bg-[size:201px_67px] bg-[position:72px_44px]">
      <div className="absolute top-[199px] left-[12px] h-[548px] w-[1173px] border-2 border-[#7c7c78]/50 bg-[#a9aaab]/55" />
      <h1 className="absolute top-[212px] left-[31px] font-['Liberation_Sans',sans-serif] text-[34px] leading-10 text-black">3. force diagram</h1>
      <svg viewBox="1058 140 1205 1220" className="absolute top-0 left-0 h-[1220px] w-[1205px]" fill="none">
        <g stroke="#8f8e8b" strokeWidth="1.500">
          <path d="M1056 612L1101 611M1056 711L1106 712M1056 811L1109 812" />
        </g>
      </svg>
      {comps.slice(0, 3).map((c, i) => <ComponentNode key={i} c={c} />)}
      {params.map((p, i) => <ParamNode key={i} p={p} />)}
      {comps.slice(4).map((c) => <ComponentNode key={c.title} c={c} />)}
      <svg viewBox="1058 140 1205 1220" className="pointer-events-none absolute top-0 left-0 h-[1220px] w-[1205px]" fill="none">
        <g stroke="#2e2e2c" strokeOpacity="0.780" strokeWidth="4">
          <path d="M1181 509C1212 509 1215 513 1245 513" />
          <path d="M1181 610C1217 610 1209 542 1245 542" />
          <path d="M1181 610C1215 610 1211 572 1245 572" />
          <path d="M1411 542C1505 542 1349 699 1443 699" />
          <path d="M1185 712C1430 712 1430 632 1675 632" />
          <path d="M1187 811C1432 811 1432 779 1677 779" />
          <path d="M1591 672C1635 672 1635 750 1677 750" />
          <path d="M1591 724C1662 724 1604 602 1675 602" />
          <path d="M1842 632C1879 632 1880 669 1917 669" />
          <path d="M1844 779C1881 779 1880 723 1917 723" />
          <path d="M2092 710H2142" />
        </g>
      </svg>
      <ComponentNode c={comps[3]} />
      {tags.map((t) => <TagLabel key={t.text} t={t} />)}
      <p className="absolute top-[705px] left-[581px] font-['Liberation_Sans',sans-serif] text-[19px] leading-6 whitespace-nowrap text-black">by definition: clockwise order of lines!</p>
      <svg viewBox="1058 140 1205 1220" className="pointer-events-none absolute top-0 left-0 h-[1220px] w-[1205px]" fill="#ee5066" fontFamily="Lato, sans-serif" fontStyle="italic">
        <text x="1064" y="773" fontSize="48">1.</text>
        <text x="1390" y="746" fontSize="50">2.</text>
        <text x="1598" y="599" fontSize="50">3a</text>
        <text x="1604" y="828" fontSize="48">3b</text>
        <text x="1987" y="566" fontSize="54">4.</text>
        <text x="2146" y="631" fontSize="42">5.</text>
      </svg>
      <div className="absolute bottom-0 left-0 h-6 w-2 border border-[#555] bg-[#999]" />
    </div>
  );
}

function Grasshopper() {
  return (
    <section className="flex min-w-0 flex-[1205_1_0%] flex-col overflow-hidden bg-[#f0f0f0] font-['Open_Sans',sans-serif]">
      <nav className="flex h-[29px] shrink-0 items-center gap-[15px] border-t border-gray-300 bg-linear-to-r from-[#f1f1f1] to-[#fafafa] pl-[11px] text-xs text-[#222]">
        {ghMenu.map((m) => <button key={m}>{m}</button>)}
      </nav>
      <div role="tablist" className="flex h-[22px] shrink-0 items-stretch gap-[15px] font-['Liberation_Sans',sans-serif] text-[11px] text-[#858585]">
        <button role="tab" aria-selected="true" className="-mr-[5px] w-[50px] rounded-t-md border border-b-0 border-[#b5b5b5] bg-white pb-px text-[#222]">Params</button>
        {ghTabs.map((t) => <button key={t} role="tab" aria-selected="false" className="pt-[2px]">{t}</button>)}
      </div>
      <div className="flex h-[59px] shrink-0 gap-1 border-t border-b-2 border-t-[#c6c6c6] border-b-[#8c8c8c] bg-linear-to-b from-[#d8d8d8] to-[#f2f2f2] pt-px pl-1 font-['Liberation_Sans',sans-serif]">
        {ribbons.map((r) => <RibbonPanel key={r.name} ribbon={r} />)}
      </div>
      <div className="flex h-[30px] shrink-0 items-center bg-linear-to-b from-white to-[#f2f2f2] pb-[2px] pl-1">
        <button aria-label="Open" className="w-[23px]">
          <svg viewBox="0 0 22 22" className="h-[22px] w-[22px]"><path d="M3 1h10l5 4v8H3z" fill="#f5f5f5" stroke="#888" /><path d="M1 21V10h6l2-3h9v14z" fill="#7ec747" stroke="#3f7a22" /><path d="M2 11h6l2-3h7v3z" fill="#b5e58c" /></svg>
        </button>
        <button aria-label="Save" className="ml-[5px] w-[22px]">
          <svg viewBox="0 0 22 22" className="h-[22px] w-[22px]"><path d="M1 1h20v20H3l-2-2z" fill="#2f7bd8" stroke="#1c3f7d" strokeWidth="1.500" /><path d="M5 2h12v8H5z" fill="#e9eef5" /><path d="M6 14h10v7H6z" fill="#c9ced6" stroke="#234" /><path d="M8 15h3v5H8z" fill="#223a66" /></svg>
        </button>
        <span className="ml-[6px] h-5 w-px bg-[#cfcfcf]" />
        <span className="relative ml-[3px] h-[23px] w-[144px]">
          <select aria-label="Zoom" className="h-full w-full appearance-none border border-[#8c8c8c] bg-white pb-[2px] pl-[2px] text-xs leading-none text-[#222]">
            <option>167%</option>
          </select>
          <svg viewBox="0 0 8 5" className="pointer-events-none absolute top-[9px] right-1 h-[5px] w-2"><path d="M.500.500L4 4 7.500.500" fill="none" stroke="#555" /></svg>
        </span>
        <button aria-label="Zoom extents" className="ml-1">
          <svg viewBox="0 0 24 24" className="h-6 w-6"><path d="M3 9V3h6M15 3h6v6M21 15v6h-6M9 21H3v-6" fill="none" stroke="#111" strokeWidth="3.600" /><path d="M9.500 9.500l5 5M14.500 9.500l-5 5" stroke="#111" strokeWidth="2" /></svg>
        </button>
        <svg viewBox="0 0 4 3" className="ml-[7px] h-[3px] w-1"><path d="M0 0h4L2 3z" /></svg>
        <button aria-label="Preview" className="ml-[7px]">
          <svg viewBox="0 0 24 24" className="h-[23px] w-[23px]"><path d="M1 13Q12-1 23 13 12 24 1 13z" fill="#f3f3f3" stroke="#444" strokeWidth="1.300" /><circle cx="12" cy="12" r="6" fill="#5bb4de" stroke="#24526b" /><circle cx="12" cy="12" r="2.800" fill="#111" /><circle cx="10" cy="10" r="1.200" fill="#fff" /></svg>
        </button>
        <svg viewBox="0 0 4 3" className="ml-[7px] h-[3px] w-1"><path d="M0 0h4L2 3z" /></svg>
        <button aria-label="Sketch" className="ml-[6px]">
          <svg viewBox="0 0 24 24" className="h-6 w-6"><path d="M2 11c4-3 7-2 4 3s-2 8 5 6" fill="none" stroke="#7a2a1c" strokeWidth="2" /><path d="M22 2q-9 3-12 11l6 6q8-8 6-17z" fill="#e5202c" /><path d="M20 5q-6 4-7 9" stroke="#ff9a9a" strokeWidth="2.400" fill="none" /><path d="M10 13l6 6-7 2z" fill="#f0c07a" stroke="#333" strokeWidth="0.700" /></svg>
        </button>
      </div>
      <Canvas />
    </section>
  );
}

export default function App() {
  return (
    <main className="flex h-screen w-full overflow-hidden">
      <Rhino />
      <Grasshopper />
    </main>
  );
}
